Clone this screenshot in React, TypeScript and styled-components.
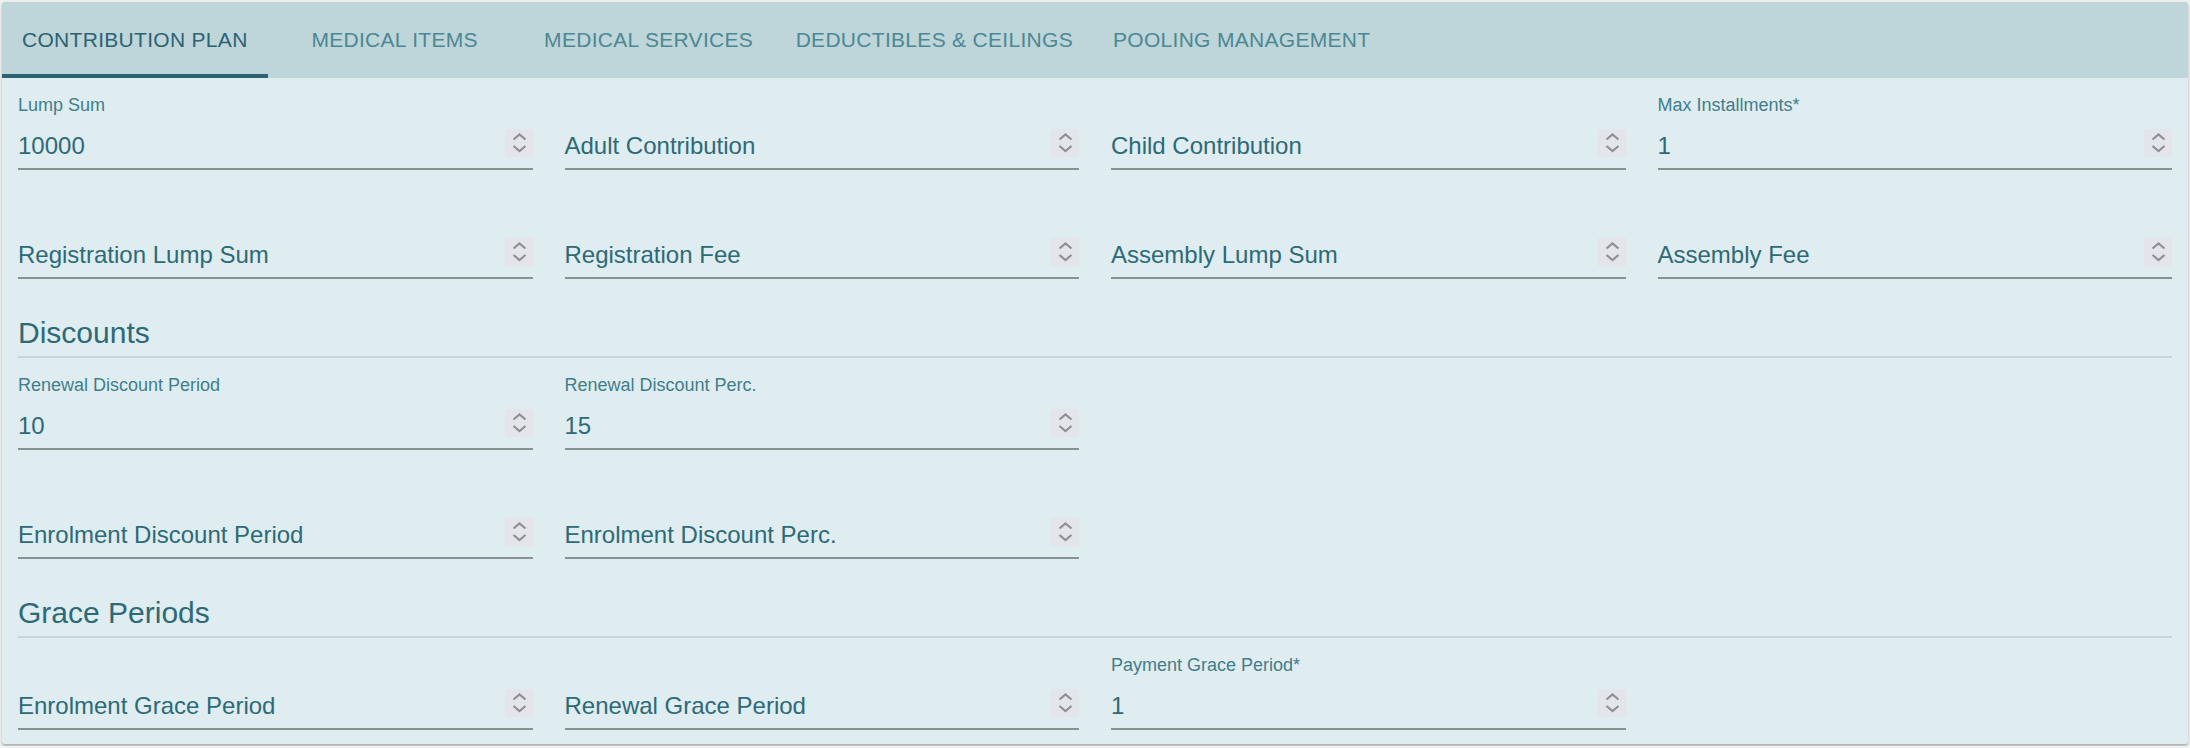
import { FC } from 'react'
import styled, { createGlobalStyle } from 'styled-components'

const GlobalStyle = createGlobalStyle`
  html, body {
    margin: 0;
    padding: 0;
    background: #f1f3f3;
    font-family: 'Liberation Sans', Arial, sans-serif;
  }
`

const Page = styled.div`
  padding: 2px;
  box-sizing: border-box;
  width: 2190px;
`

const Card = styled.div`
  background: #dfecf0;
  box-shadow: 0 2px 2px rgba(0, 0, 0, 0.22), 0 1px 5px rgba(0, 0, 0, 0.1);
  border-radius: 3px;
  overflow: hidden;
`

const TabBar = styled.div`
  display: flex;
  height: 76px;
  background: #bed5d9;
`

const Tab = styled.div<{ $active?: boolean }>`
  display: flex;
  align-items: center;
  justify-content: center;
  min-width: 254px;
  padding: 4px 20px 0;
  box-sizing: border-box;
  font-size: 21px;
  letter-spacing: 0.3px;
  text-transform: uppercase;
  color: ${(p) => (p.$active ? '#2c6372' : '#4b8893')};
  border-bottom: 4px solid ${(p) => (p.$active ? '#2c6372' : 'transparent')};
`

const Body = styled.div`
  display: flex;
  flex-direction: column;
  padding: 0 16px 14px;
`

const FieldGrid = styled.div`
  display: grid;
  grid-template-columns: repeat(4, 1fr);
  column-gap: 32px;
  row-gap: 31px;
  margin-top: 14px;
`

const SectionTitle = styled.div`
  margin-top: 36px;
  font-size: 30px;
  line-height: 36px;
  color: #2d6a77;
  padding-bottom: 5px;
  border-bottom: 2px solid #c6d6d9;
`

const Field = styled.div`
  display: flex;
  flex-direction: column;
  min-width: 0;
`

const Label = styled.div`
  height: 27px;
  line-height: 27px;
  font-size: 18px;
  color: #3f7e8a;
  margin-bottom: 4px;
`

const InputRow = styled.div`
  display: flex;
  align-items: flex-start;
  justify-content: space-between;
  height: 45px;
  padding-top: 6px;
  box-sizing: content-box;
  height: 39px;
  border-bottom: 2px solid #859393;
`

const Value = styled.span`
  margin-top: 3px;
  font-size: 24px;
  line-height: 28px;
  color: #2d6a77;
  white-space: nowrap;
`

const SpinBox = styled.div`
  width: 28px;
  height: 28px;
  background: #e3e5ea;
  flex-shrink: 0;
  display: flex;
`

const Spinner: FC = () => (
  <SpinBox>
    <svg width="28" height="28" viewBox="0 0 28 28">
      <polyline points="8.5,10.5 14.5,5.5 20.5,10.5" fill="none" stroke="#8f8f99" strokeWidth="2.2" />
      <polyline points="8.5,17 14.5,22 20.5,17" fill="none" stroke="#8f8f99" strokeWidth="2.2" />
    </svg>
  </SpinBox>
)

type FieldProps = { label: string; value?: string }

const NumberField: FC<FieldProps> = ({ label, value }) => {
  const filled = value !== undefined
  return (
    <Field>
      <Label>{filled ? label : ''}</Label>
      <InputRow>
        <Value>{filled ? value : label}</Value>
        <Spinner />
      </InputRow>
    </Field>
  )
}

const Blank = styled.div``

const tabs = ['Contribution Plan', 'Medical Items', 'Medical Services', 'Deductibles & Ceilings', 'Pooling Management']

export default function App() {
  return (
    <>
      <GlobalStyle />
      <Page>
        <Card>
          <TabBar>
            {tabs.map((t, i) => (
              <Tab key={t} $active={i === 0}>
                {t}
              </Tab>
            ))}
          </TabBar>
          <Body>
            <FieldGrid>
              <NumberField label="Lump Sum" value="10000" />
              <NumberField label="Adult Contribution" />
              <NumberField label="Child Contribution" />
              <NumberField label="Max Installments*" value="1" />
              <NumberField label="Registration Lump Sum" />
              <NumberField label="Registration Fee" />
              <NumberField label="Assembly Lump Sum" />
              <NumberField label="Assembly Fee" />
            </FieldGrid>
            <SectionTitle>Discounts</SectionTitle>
            <FieldGrid>
              <NumberField label="Renewal Discount Period" value="10" />
              <NumberField label="Renewal Discount Perc." value="15" />
              <Blank />
              <Blank />
              <NumberField label="Enrolment Discount Period" />
              <NumberField label="Enrolment Discount Perc." />
              <Blank />
              <Blank />
            </FieldGrid>
            <SectionTitle>Grace Periods</SectionTitle>
            <FieldGrid>
              <NumberField label="Enrolment Grace Period" />
              <NumberField label="Renewal Grace Period" />
              <NumberField label="Payment Grace Period*" value="1" />
              <Blank />
            </FieldGrid>
          </Body>
        </Card>
      </Page>
    </>
  )
}
